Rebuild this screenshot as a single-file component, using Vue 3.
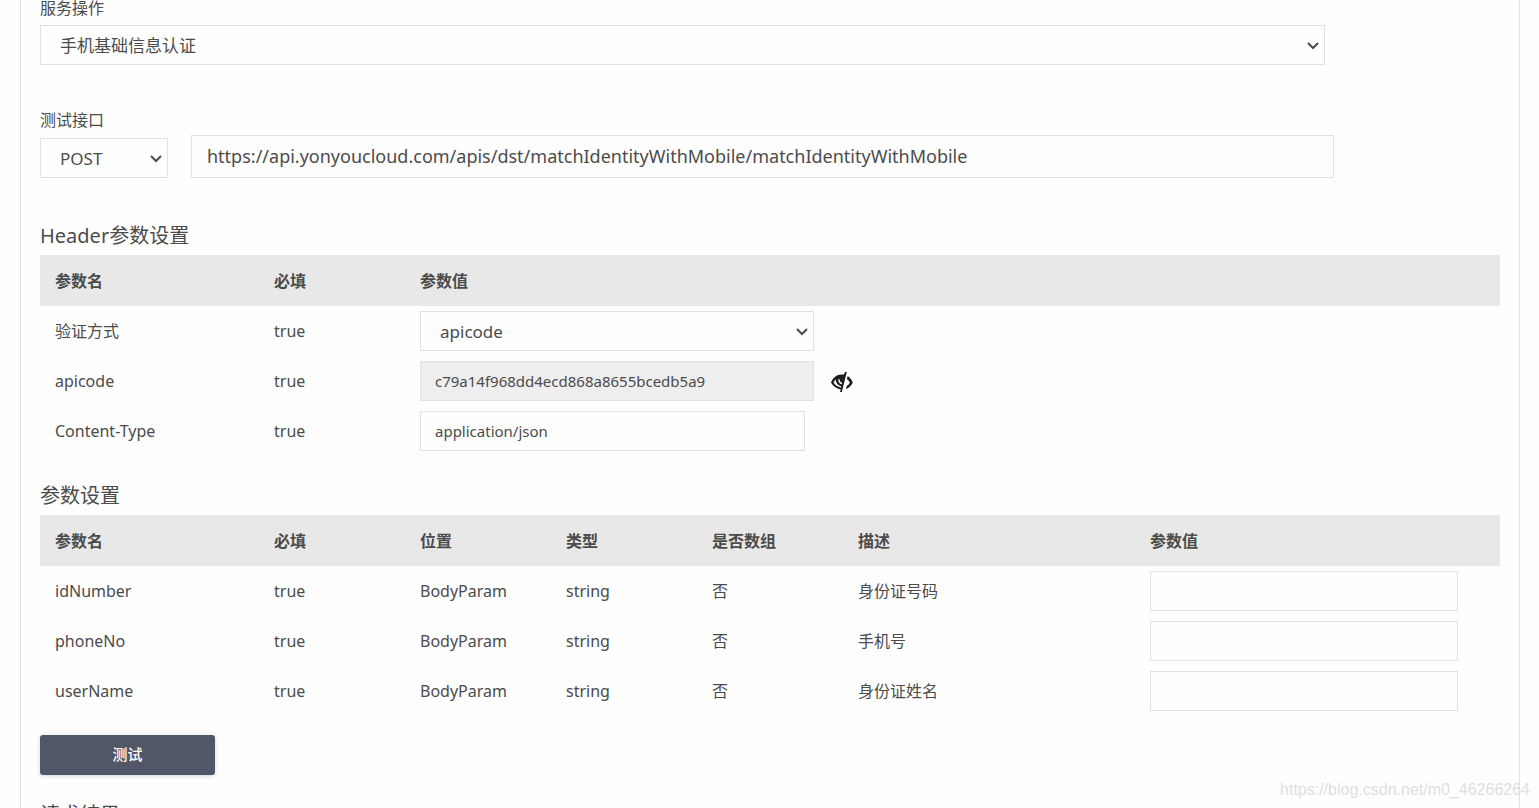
<script setup>
import { ref } from 'vue'

const operation = ref('手机基础信息认证')
const method = ref('POST')
const url = ref('https://api.yonyoucloud.com/apis/dst/matchIdentityWithMobile/matchIdentityWithMobile')
const authType = ref('apicode')
const apicode = ref('c79a14f968dd4ecd868a8655bcedb5a9')
const contentType = ref('application/json')

const columns = ['参数名', '必填', '位置', '类型', '是否数组', '描述', '参数值']
const params = ref([
  { name: 'idNumber', desc: '身份证号码', value: '' },
  { name: 'phoneNo', desc: '手机号', value: '' },
  { name: 'userName', desc: '身份证姓名', value: '' }
])
</script>

<template>
  <div class="page">
    <main class="panel">
      <label class="label" for="operation">服务操作</label>
      <div class="select operation">
        <select id="operation" v-model="operation">
          <option>手机基础信息认证</option>
        </select>
        <svg class="chevron" viewBox="0 0 12 8"><path d="M1 1l5 5 5-5" /></svg>
      </div>

      <div class="endpoint">
        <div class="method">
          <label class="label" for="method">测试接口</label>
          <div class="select">
            <select id="method" v-model="method">
              <option>POST</option>
            </select>
            <svg class="chevron" viewBox="0 0 12 8"><path d="M1 1l5 5 5-5" /></svg>
          </div>
        </div>
        <input class="input url" v-model="url" type="text" aria-label="测试接口地址" />
      </div>

      <h2 class="title">Header参数设置</h2>
      <table class="table">
        <colgroup>
          <col class="w15" /><col class="w10" /><col />
        </colgroup>
        <thead>
          <tr><th>参数名</th><th>必填</th><th>参数值</th></tr>
        </thead>
        <tbody>
          <tr>
            <td><label for="auth">验证方式</label></td>
            <td>true</td>
            <td>
              <div class="select field-wide">
                <select id="auth" v-model="authType">
                  <option>apicode</option>
                </select>
                <svg class="chevron" viewBox="0 0 12 8"><path d="M1 1l5 5 5-5" /></svg>
              </div>
            </td>
          </tr>
          <tr>
            <td><label for="code">apicode</label></td>
            <td>true</td>
            <td>
              <div class="secret">
                <input id="code" class="input field-wide" v-model="apicode" type="text" readonly />
                <button class="eye" type="button" aria-label="apicode">
                  <svg viewBox="0 0 22 20">
                    <path class="solid" d="M0 10.500C2 6 5.500 2.500 10.500 2.500h2.400L14 0h1.800L10.800 20H9l.7-2.600C5.500 16.600 1.800 14.200 0 10.500z" />
                    <path class="gap" d="M2.600 10.500C3.200 9.300 3.900 8.400 4.900 7.600c-.1 3 1.500 5.700 5.400 6.800l-.3 1C6.600 15 4 13.200 2.600 10.500zM7.300 7.200c-.2 2.700 1 4.500 3.400 5.100l.4-1.500C9.300 10.400 8.600 9 8.700 7.200z" />
                    <path class="solid" d="M16.700 4c2.300 1.400 3.900 3.500 5.100 6.500-1.400 3.200-3.600 5.400-6.900 6.600l.8-3.100c1.500-.9 2.500-2 3.200-3.500-.6-1.400-1.600-2.600-3-3.600z" />
                  </svg>
                </button>
              </div>
            </td>
          </tr>
          <tr>
            <td><label for="ctype">Content-Type</label></td>
            <td>true</td>
            <td><input id="ctype" class="input field" v-model="contentType" type="text" /></td>
          </tr>
        </tbody>
      </table>

      <h2 class="title second">参数设置</h2>
      <table class="table">
        <colgroup>
          <col class="w15" /><col class="w10" /><col class="w10" /><col class="w10" />
          <col class="w10" /><col class="w20" /><col />
        </colgroup>
        <thead>
          <tr><th v-for="c in columns" :key="c">{{ c }}</th></tr>
        </thead>
        <tbody>
          <tr v-for="p in params" :key="p.name">
            <td><label :for="p.name">{{ p.name }}</label></td>
            <td>true</td>
            <td>BodyParam</td>
            <td>string</td>
            <td>否</td>
            <td>{{ p.desc }}</td>
            <td><input :id="p.name" class="input field-param" v-model="p.value" type="text" /></td>
          </tr>
        </tbody>
      </table>

      <button class="test" type="button">测试</button>
      <h2 class="title result">请求结果</h2>
    </main>
    <div class="watermark">https://blog.csdn.net/m0_46266264</div>
  </div>
</template>

<style>
body {
  margin: 0;
  background: #fefefe;
}
</style>

<style scoped>
.page {
  position: relative;
  height: 100vh;
  overflow: hidden;
  color: #4b4b4b;
  font: 16px/20px "Noto Sans", "Noto Sans CJK SC", sans-serif;
}
.page *,
.page {
  box-sizing: border-box;
}
.panel {
  margin: 0 19px 0 20px;
  padding: 0 19px 40px;
  border: solid #e1e1e1;
  border-width: 0 1px;
}
.label {
  display: block;
  line-height: 16px;
}
.select {
  display: grid;
  align-items: center;
}
.select > * {
  grid-area: 1 / 1;
}
.select select {
  width: 100%;
  height: 40px;
  padding: 2px 30px 0 19px;
  border: 1px solid #e1e1e1;
  border-radius: 0;
  background: #fefefe;
  color: inherit;
  font: inherit;
  font-size: 17px;
  appearance: none;
}
.chevron {
  width: 12px;
  height: 8px;
  margin: 2px 6px 0 0;
  justify-self: end;
  pointer-events: none;
  fill: none;
  stroke: #4b4b4b;
  stroke-width: 2;
}
.operation {
  width: 88%;
  margin-top: 9px;
}
.endpoint {
  display: flex;
  align-items: flex-end;
  gap: 23px;
  margin-top: 47px;
  padding-right: 166px;
}
.method {
  width: 128px;
}
.method .select {
  margin-top: 10px;
}
.input {
  display: block;
  height: 40px;
  padding: 0 14px;
  border: 1px solid #e1e1e1;
  border-radius: 0;
  background: #fefefe;
  color: inherit;
  font: inherit;
  font-size: 15px;
}
.input[readonly] {
  background: #eee;
}
.url {
  flex: 1;
  height: 43px;
  padding: 0 15px 2px;
  font-size: 18px;
}
.title {
  margin: 43px 0 4px;
  font-size: 20px;
  font-weight: 400;
  line-height: 30px;
}
.second {
  margin-top: 25px;
}
.result {
  margin-top: 25px;
}
.table {
  width: 100%;
  table-layout: fixed;
  border-collapse: collapse;
}
.w10 {
  width: 10%;
}
.w15 {
  width: 15%;
}
.w20 {
  width: 20%;
}
th,
td {
  height: 50px;
  padding: 0 0 0 15px;
  text-align: left;
}
th {
  height: 51px;
  background: #e8e8e8;
  font-weight: 700;
}
.field-wide {
  width: 394px;
}
.field {
  width: 385px;
}
.field-param {
  width: 88%;
}
.secret {
  display: flex;
  align-items: center;
  gap: 17px;
}
.eye {
  display: flex;
  padding: 2px 0 0;
  border: 0;
  background: none;
}
.eye svg {
  width: 22px;
  height: 20px;
}
.solid {
  fill: #1d1d1f;
}
.gap {
  fill: #fefefe;
}
.test {
  display: block;
  width: 175px;
  height: 40px;
  margin-top: 19px;
  padding: 0 0 2px;
  border: 0;
  border-radius: 3px;
  background: #515767;
  box-shadow: 0 1px 4px rgba(0, 0, 0, 0.16);
  color: #fff;
  font: inherit;
  font-size: 15px;
  font-weight: 500;
}
.watermark {
  position: absolute;
  right: 9px;
  bottom: 8px;
  color: #dedede;
  font: 16px/20px "Liberation Sans", Arial, sans-serif;
}
</style>
